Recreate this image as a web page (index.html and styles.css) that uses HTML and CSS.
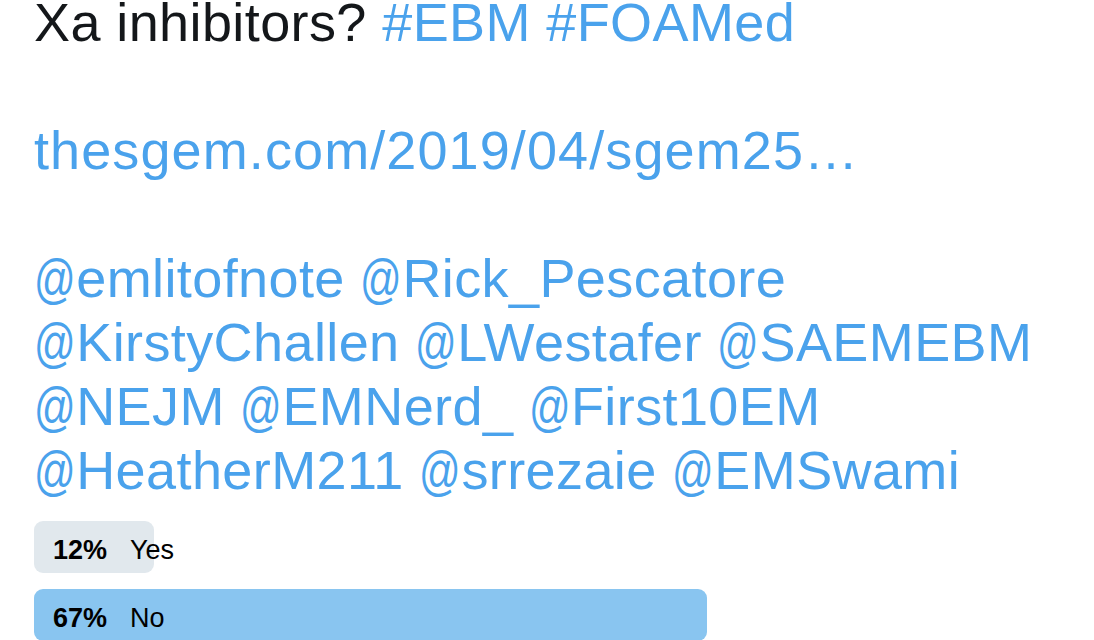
FILE: index.html
```html
<!DOCTYPE html>
<html>
<head>
<meta charset="utf-8">
<link rel="stylesheet" href="styles.css">
</head>
<body>
<div class="tweet">
  <p class="text">Xa inhibitors? <a class="link">#EBM</a> <a class="link">#FOAMed</a><br><br><a class="link url">thesgem.com/2019/04/sgem25…</a><br><br><a class="link"><span class="at">@</span>emlitofnote</a> <a class="link"><span class="at">@</span>Rick_Pescatore</a><br><a class="link"><span class="at">@</span>KirstyChallen</a> <a class="link"><span class="at">@</span>LWestafer</a> <a class="link"><span class="at">@</span>SAEMEBM</a><br><a class="link"><span class="at">@</span>NEJM</a> <a class="link"><span class="at">@</span>EMNerd_</a> <a class="link"><span class="at">@</span>First10EM</a><br><a class="link"><span class="at">@</span>HeatherM211</a> <a class="link"><span class="at">@</span>srrezaie</a> <a class="link"><span class="at">@</span>EMSwami</a></p>
  <div class="poll">
    <div class="choice">
      <div class="bar bar-gray" style="width:120px"></div>
      <span class="pct">12%</span><span class="label">Yes</span>
    </div>
    <div class="choice">
      <div class="bar bar-blue" style="width:673px"></div>
      <span class="pct">67%</span><span class="label">No</span>
    </div>
  </div>
</div>
</body>
</html>
```
FILE: styles.css
```css
html, body {
  margin: 0;
  padding: 0;
  background: #ffffff;
  overflow: hidden;
}
.tweet {
  padding: 0 34px;
  width: 1040px;
  font-family: "Liberation Sans", Arial, sans-serif;
}
.text {
  margin: -10px 0 0 0;
  font-size: 54px;
  line-height: 64px;
  letter-spacing: 0.4px;
  color: #14171a;
  white-space: nowrap;
}
.link {
  color: #4aa2ec;
  text-decoration: none;
}
.url {
  letter-spacing: 1.1px;
}
.at {
  display: inline-block;
  transform: scaleX(0.76);
  transform-origin: left center;
  margin-right: -13px;
}
.poll {
  margin-top: 19px;
  display: flex;
  flex-direction: column;
  gap: 16px;
}
.choice {
  position: relative;
  box-sizing: border-box;
  height: 52px;
  padding-top: 6px;
  display: flex;
  align-items: center;
  font-size: 27px;
  color: #000;
}
.bar {
  position: absolute;
  left: 0;
  top: 0;
  height: 52px;
  border-radius: 9px;
}
.bar-gray { background: #e1e8ed; }
.bar-blue { background: #89c5f0; }
.pct {
  position: relative;
  font-weight: bold;
  margin-left: 19px;
  width: 77px;
}
.label {
  position: relative;
}
```
